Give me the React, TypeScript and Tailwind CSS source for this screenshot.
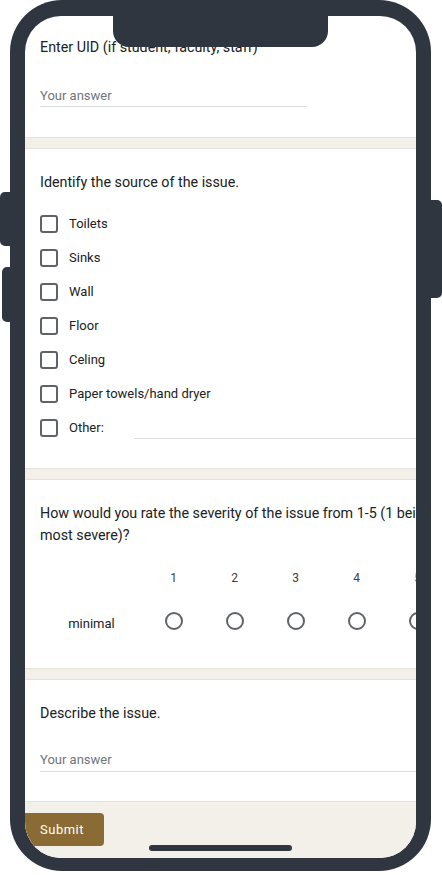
import React from 'react'

// ─── Small form pieces ─────────────────────────────────────────────
function Band() {
  return <div className="h-[12px] bg-[#f3efe9] border-y border-[#e7e3dc]" />
}

function Checkbox() {
  return <div className="w-[18px] h-[18px] shrink-0 rounded-[3px] border-2 border-[#5f6368]" />
}

function Radio() {
  return <div className="w-[18px] h-[18px] rounded-full border-2 border-[#5f6368]" />
}

const options = ['Toilets', 'Sinks', 'Wall', 'Floor', 'Celing', 'Paper towels/hand dryer']
const scale = [1, 2, 3, 4, 5]

// ─── Phone screen content ──────────────────────────────────────────
function FormContent() {
  return (
    <div className="w-[480px] font-['Roboto',sans-serif] text-[#202124]">
      {/* UID */}
      <section className="px-[15px] pt-[21px] pb-[30px]">
        <p className="text-[14.3px] leading-[20px] whitespace-nowrap">Enter UID (if student, faculty, staff)</p>
        <div className="mt-[29px] w-[267px] h-[21px] border-b border-[#dadce0] text-[13px] leading-[20px] text-[#70757a]">
          Your answer
        </div>
      </section>

      <Band />

      {/* Source */}
      <section className="px-[15px] pt-[23px] pb-[23px]">
        <p className="text-[14.3px] leading-[20px]">Identify the source of the issue.</p>
        <div className="mt-[15px] flex flex-col">
          {options.map((opt) => (
            <div key={opt} className="h-[34px] flex items-center gap-[11px]">
              <Checkbox />
              <span className="text-[13px] whitespace-nowrap">{opt}</span>
            </div>
          ))}
          <div className="h-[34px] flex items-center gap-[11px]">
            <Checkbox />
            <span className="text-[13px] w-[54px]">Other:</span>
            <div className="flex-1 h-[20px] mt-[1px] border-b border-[#e0e0e0]" />
          </div>
        </div>
      </section>

      <Band />

      {/* Severity */}
      <section className="px-[15px] pt-[22px] pb-[38px]">
        <p className="text-[14.3px] leading-[22px] whitespace-nowrap">
          How would you rate the severity of the issue from 1-5 (1 being least severe, 5 being
          <br />
          most severe)?
        </p>
        <div className="mt-[24px] flex h-[16px] text-[12px] leading-[16px] text-[#3c4043]">
          <div className="w-[103px]" />
          {scale.map((n) => (
            <div key={n} className="w-[61px] text-center">{n}</div>
          ))}
        </div>
        <div className="mt-[26px] flex items-center h-[18px]">
          <div className="w-[103px] text-center text-[13px] pt-[5px]">minimal</div>
          {scale.map((n) => (
            <div key={n} className="w-[61px] flex justify-center">
              <Radio />
            </div>
          ))}
        </div>
      </section>

      <Band />

      {/* Describe */}
      <section className="px-[15px] pt-[23px] pb-[29px]">
        <p className="text-[14.3px] leading-[20px]">Describe the issue.</p>
        <div className="mt-[27px] h-[22px] border-b border-[#dadce0] text-[13px] leading-[20px] text-[#70757a]">
          Your answer
        </div>
      </section>

      {/* Footer */}
      <div className="bg-[#f3efe9] border-t border-[#e7e3dc] pt-[11px] h-[80px]">
        <button className="w-[79px] h-[33px] pl-[15px] text-left rounded-r-[4px] bg-[#8b6b34] text-white text-[13px] font-normal tracking-[0.5px]">
          Submit
        </button>
      </div>
    </div>
  )
}

// ─── Phone frame ───────────────────────────────────────────────────
export default function App() {
  return (
    <div className="relative w-[442px] h-[875px] bg-white overflow-hidden">
      {/* Side buttons */}
      <div className="absolute left-0 top-[192px] w-[12px] h-[54px] rounded-l-[5px] bg-[#2f3640]" />
      <div className="absolute left-[2px] top-[267px] w-[10px] h-[55px] rounded-l-[5px] bg-[#2f3640]" />
      <div className="absolute right-0 top-[200px] w-[12px] h-[98px] rounded-r-[5px] bg-[#2f3640]" />

      {/* Body */}
      <div className="relative ml-[10px] w-[421px] h-[871px] rounded-[52px] bg-[#2f3640] pt-[16px] px-[15px] pb-[13px]">
        <div className="relative w-full h-full overflow-hidden rounded-[36px] bg-white">
          <FormContent />

          {/* Notch */}
          <div className="absolute top-0 left-[88px] w-[215px] h-[31px] rounded-b-[16px] bg-[#2f3640]" />
          {/* Home indicator */}
          <div className="absolute bottom-[7px] left-[124px] w-[143px] h-[6px] rounded-full bg-[#2f3640]" />
        </div>
      </div>
    </div>
  )
}
